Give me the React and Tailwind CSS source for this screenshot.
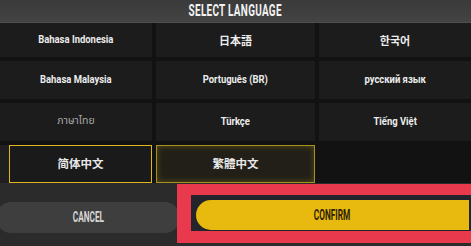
export default function App() {
  const cell =
    "flex items-center justify-center bg-[#1c1c1c] text-[#ececec] text-[10.5px] font-bold";
  const cjk = "font-['Noto_Sans_CJK_SC','Noto_Sans_CJK_JP',sans-serif]";
  const sq = "inline-block scale-x-[0.9]";
  return (
    <div className="relative w-[471px] h-[246px] overflow-hidden bg-[#2b2b2b] font-['Roboto','Noto_Sans','DejaVu_Sans',sans-serif]">
      <div className="h-[23px] flex items-center justify-center bg-gradient-to-b from-[#3a3a3a] to-[#444444] border-b border-[#4e4e4e]">
        <span className="inline-block scale-x-[0.62] text-[16px] leading-none font-bold text-[#f2f2f2] tracking-[0.5px]">
          SELECT LANGUAGE
        </span>
      </div>
      <div className="grid grid-cols-[152px_159px_1fr] grid-rows-[34px_38px_38px_38px] gap-x-[4px] gap-y-[4px] bg-[#121212]">
        <div className={cell}><span className={sq}>Bahasa Indonesia</span></div>
        <div className={`${cell} font-['Noto_Sans_CJK_JP',sans-serif] text-[11px]`}>日本語</div>
        <div className={`${cell} font-['Noto_Sans_CJK_KR',sans-serif] text-[11px]`}>한국어</div>

        <div className={cell}><span className={sq}>Bahasa Malaysia</span></div>
        <div className={cell}><span className={sq}>Português (BR)</span></div>
        <div className={cell}><span className={sq}>русский язык</span></div>

        <div className={`${cell} !font-normal !text-[#a8a8a8] font-['Noto_Sans_Thai','Noto_Sans','DejaVu_Sans',sans-serif]`}>ภาษาไทย</div>
        <div className={cell}><span className={sq}>Türkçe</span></div>
        <div className={cell}><span className={sq}>Tiếng Việt</span></div>

        <div className="flex bg-[#1f1f1f]">
          <div className={`ml-[9px] flex-1 flex items-center justify-center border-[1.5px] border-[#e2b41e] bg-[#1a1a1a] text-[#e8e8e8] text-[11.5px] font-bold ${cjk}`}>
            简体中文
          </div>
        </div>
        <div className={`flex items-center justify-center border-[1.5px] border-[#a8921f] bg-[#211f17] shadow-[inset_0_0_6px_rgba(210,175,40,0.35)] text-[#e8e8e8] text-[11.5px] font-bold font-['Noto_Sans_CJK_TC',sans-serif]`}>
          繁體中文
        </div>
        <div className="bg-[#121212]" />
      </div>
      <div className="flex items-start h-[63px]">
        <div className="ml-[-4px] mt-[19px] w-[184px] h-[31px] shrink-0 rounded-full bg-[#3e3e3e] flex items-center justify-center">
          <span className="inline-block scale-x-[0.55] text-[15px] font-bold text-[#d6d6d6] leading-none">
            CANCEL
          </span>
        </div>
        <div className="ml-[-3px] mt-[1px] flex-1 h-[59px] bg-[#24242c] border-solid border-[#e8394d] border-l-[14px] border-t-[11px] border-b-[12px] border-r-0 pl-[5px] pt-[5px]">
          <div className="w-[273px] h-[30px] bg-[#e8b90e] rounded-l-full rounded-r-[8px] flex items-center justify-center">
            <span className="inline-block scale-x-[0.55] text-[15px] font-bold text-[#2a2205] leading-none">
              CONFIRM
            </span>
          </div>
        </div>
      </div>
    </div>
  );
}
